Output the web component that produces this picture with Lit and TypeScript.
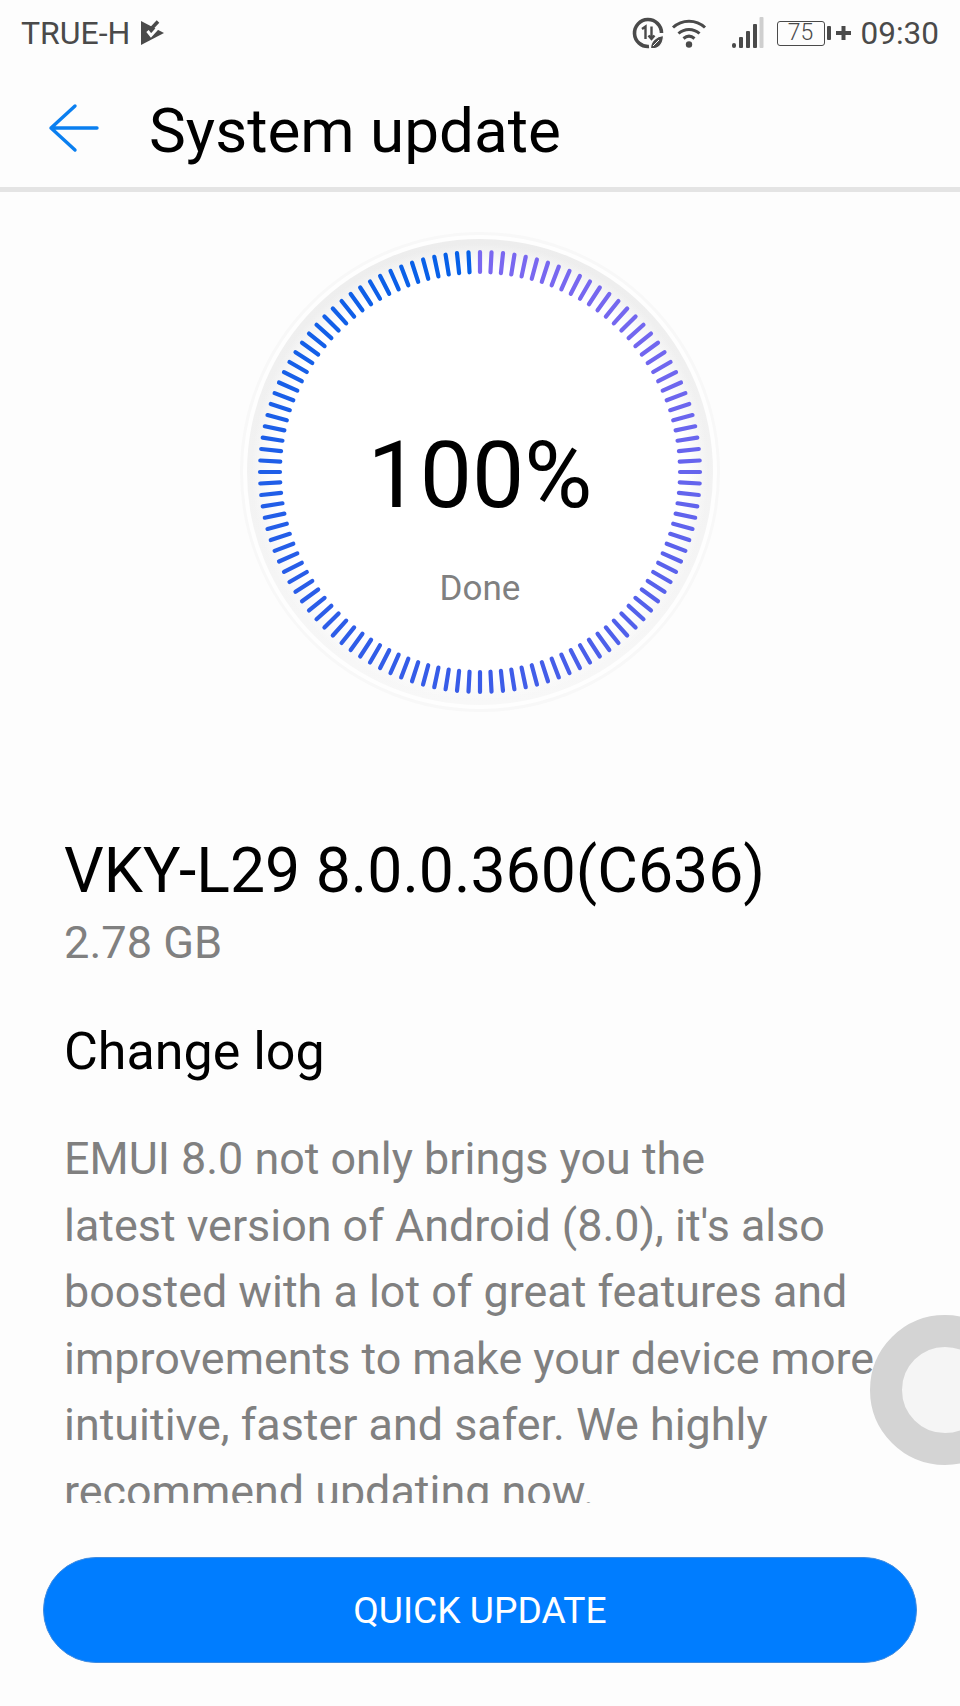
import { LitElement, html, css, svg } from "lit";
import { customElement } from "lit/decorators.js";

function mix(a: number[], b: number[], t: number) {
  return `rgb(${a.map((v, i) => Math.round(v + (b[i] - v) * t)).join(",")})`;
}

function ticks() {
  const out = [];
  const c = 240;
  for (let i = 0; i < 120; i++) {
    const a = (i * 3 * Math.PI) / 180;
    const s = Math.sin(a), k = Math.cos(a);
    let col: string;
    if (i <= 60) col = mix([122, 104, 240], [58, 92, 232], Math.pow(i / 60, 1.6));
    else col = mix([58, 92, 232], [4, 96, 232], (i - 60) / 60);
    out.push(svg`<line x1=${c + 200 * s} y1=${c - 200 * k} x2=${c + 220 * s} y2=${c - 220 * k} stroke=${col} stroke-width="4.2" stroke-linecap="round"/>`);
  }
  return out;
}

@customElement("app-root")
export class AppRoot extends LitElement {
  static styles = css`
    :host {
      display: block;
      width: 960px;
      height: 1706px;
      background: #fdfdfd;
      font-family: Roboto, "Liberation Sans", sans-serif;
      position: relative;
      overflow: hidden;
    }
    .status {
      height: 66px;
      display: flex;
      align-items: center;
      justify-content: space-between;
      padding: 0 21px 0 21px;
      color: #4a4a4a;
      font-size: 32px;
      box-sizing: border-box;
    }
    .left, .right { display: flex; align-items: center; }
    .left svg { margin-left: 10px; }
    .right svg { display: block; }
    .batt {
      width: 48px;
      height: 25px;
      border: 1.5px solid #4a4a4a;
      border-radius: 3px;
      box-sizing: border-box;
      font-size: 23px;
      line-height: 22px;
      text-align: center;
      font-weight: 300;
    }
    .time { font-size: 31.5px; margin-left: 8px; }
    .bar {
      height: 126px;
      border-bottom: 5px solid #e4e4e4;
      display: flex;
      align-items: center;
      box-sizing: border-box;
      padding-left: 47px;
    }
    .bar svg { margin-top: 2px; }
    .bar h1 {
      margin: 7px 0 0 50px;
      font-size: 62px;
      font-weight: 400;
      color: #000;
    }
    .dial {
      display: grid;
      place-items: center;
      margin: 40px auto 0;
      width: 480px;
      height: 480px;
    }
    .dial > * { grid-area: 1 / 1; }
    .dial-text { display: flex; flex-direction: column; align-items: center; padding-top: 90px; }
    .pct { font-size: 93px; line-height: 100px; color: #000; }
    .done { font-size: 35px; line-height: 40px; color: #808080; margin-top: 43px; }
    .scroll {
      height: 791px;
      overflow: hidden;
      padding: 123px 64px 0;
      box-sizing: border-box;
      width: 960px;
    }
    .ver { font-size: 62.5px; line-height: 72px; color: #000; }
    .size { font-size: 45.2px; line-height: 54px; color: #808080; margin-top: 9px; }
    .log { font-size: 52px; line-height: 64px; color: #000; margin-top: 50px; }
    .body { font-size: 44.85px; line-height: 66.5px; color: #808080; margin-top: 42px; white-space: nowrap; }
    .foot { padding: 54px 43px 0; }
    .btn {
      height: 106px;
      border-radius: 53px;
      background: #007dff;
      border: 1.5px solid #3f8be0;
      box-sizing: border-box;
      color: #fff;
      font-size: 37.2px;
      display: flex;
      align-items: center;
      justify-content: center;
    }
    .float {
      position: absolute;
      left: 870px;
      top: 1315px;
      width: 150px;
      height: 150px;
      border-radius: 50%;
      background: #f5f5f5;
      border: 32px solid #d4d4d4;
      box-sizing: border-box;
    }
  `;

  render() {
    return html`
      <div class="status">
        <div class="left">
          <span>TRUE-H</span>
          <svg width="25" height="26" viewBox="0 0 25 26">
            <path d="M1 1 L24 13 L1 25 Z" fill="#4a4a4a"/>
            <path d="M7.5 11 L11 15.5 L20 5.5" fill="none" stroke="#fdfdfd" stroke-width="3"/>
            <path d="M10.5 9.5 L18 1.5" fill="none" stroke="#4a4a4a" stroke-width="3.6"/>
          </svg>
        </div>
        <div class="right">
          <svg width="32" height="32" viewBox="0 0 32 32">
            <path d="M17 29.5 A13.5 13.5 0 1 1 29.5 16" fill="none" stroke="#4a4a4a" stroke-width="3.6"/>
            <path d="M10 12 L13.5 9.5 V22 M19.5 9.5 V22 M16.5 18.5 L19.5 22 L22.5 18.5" fill="none" stroke="#4a4a4a" stroke-width="2.4"/>
            <path d="M18.5 31.5 C18.5 24 24 19.5 31.5 18.5 C31.5 27 27 32.5 18.5 31.5 Z" fill="#4a4a4a" stroke="#fdfdfd" stroke-width="1.2"/>
            <path d="M21 29 L27 23" stroke="#fdfdfd" stroke-width="1"/>
          </svg>
          <svg style="margin-left:7px" width="36" height="30" viewBox="0 0 36 30">
            <path d="M2 9.5 C11 1 25 1 34 9.5" fill="none" stroke="#4a4a4a" stroke-width="3"/>
            <path d="M7.5 15.5 C13.5 10 22.5 10 28.5 15.5" fill="none" stroke="#4a4a4a" stroke-width="3"/>
            <path d="M12.5 20.5 C16 17.5 20 17.5 23.5 20.5" fill="none" stroke="#4a4a4a" stroke-width="3"/>
            <circle cx="18" cy="26.5" r="3.2" fill="#4a4a4a"/>
          </svg>
          <svg style="margin-left:24px" width="33" height="32" viewBox="0 0 33 32">
            <rect x="1" y="26" width="4" height="5" rx="2" fill="#4a4a4a"/>
            <rect x="8" y="20" width="4" height="11" rx="1" fill="#4a4a4a"/>
            <rect x="15" y="14" width="4" height="17" rx="1" fill="#4a4a4a"/>
            <rect x="22" y="7" width="4" height="24" rx="1" fill="#4a4a4a"/>
            <rect x="28.5" y="0" width="4" height="31" rx="1" fill="#cfcfcf"/>
          </svg>
          <div class="batt" style="margin-left:13px">75</div>
          <svg style="margin-left:2px" width="26" height="16" viewBox="0 0 26 16">
            <rect x="0" y="1" width="4" height="14" rx="1" fill="#4a4a4a"/>
            <path d="M9 8 H24 M16.5 1 V15" stroke="#4a4a4a" stroke-width="4"/>
          </svg>
          <span class="time">09:30</span>
        </div>
      </div>
      <div class="bar">
        <svg width="52" height="50" viewBox="0 0 52 50">
          <path d="M28 3 L4 25 L28 47 M4 25 H50" fill="none" stroke="#0a7ff0" stroke-width="3.4" stroke-linecap="round" stroke-linejoin="round"/>
        </svg>
        <h1>System update</h1>
      </div>
      <div class="dial">
        <svg width="480" height="480" viewBox="0 0 480 480">
          <defs>
            <linearGradient id="band" x1="0" y1="0" x2="0" y2="1">
              <stop offset="0" stop-color="#ededed"/>
              <stop offset="1" stop-color="#f8f8f8"/>
            </linearGradient>
            <radialGradient id="fade" gradientUnits="userSpaceOnUse" cx="240" cy="240" r="233">
              <stop offset="0.88" stop-color="#fff"/>
              <stop offset="0.98" stop-color="#fff" stop-opacity="0"/>
            </radialGradient>
          </defs>
          <circle cx="240" cy="240" r="238.5" fill="#fefefe" stroke="#f8f8f8" stroke-width="3"/>
          <circle cx="240" cy="240" r="233" fill="url(#band)"/>
          <circle cx="240" cy="240" r="233" fill="url(#fade)"/>
          ${ticks()}
        </svg>
        <div class="dial-text">
          <div class="pct">100%</div>
          <div class="done">Done</div>
        </div>
      </div>
      <div class="scroll">
        <div class="ver">VKY-L29 8.0.0.360(C636)</div>
        <div class="size">2.78 GB</div>
        <div class="log">Change log</div>
        <div class="body">EMUI 8.0 not only brings you the<br>latest version of Android (8.0), it's also<br>boosted with a lot of great features and<br>improvements to make your device more<br>intuitive, faster and safer. We highly<br>recommend updating now.</div>
      </div>
      <div class="foot"><div class="btn">QUICK UPDATE</div></div>
      <div class="float"></div>
    `;
  }
}
